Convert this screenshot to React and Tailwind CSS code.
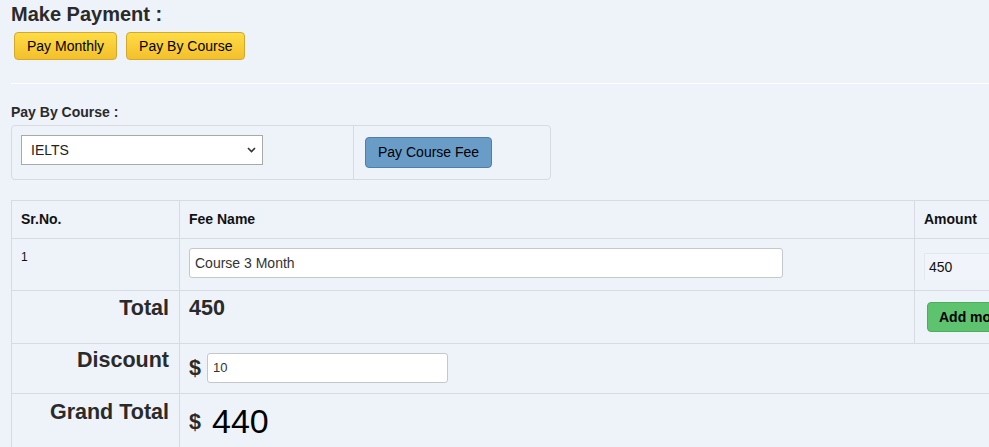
import React from "react";

export default function App() {
  const font = { fontFamily: '"Liberation Sans", Arial, sans-serif' };
  return (
    <div className="h-screen w-full overflow-hidden bg-[#eef2f9] text-[#222]" style={font}>
      <div className="pl-[11px] pt-[2px]">
        <div className="text-[20px] font-bold leading-[24px] text-[#2a2a2a]">Make Payment :</div>
        <div className="mt-[6px] flex gap-[9px] pl-[3px]">
          <button className="h-[28px] rounded-[4px] border border-[#d1a92e] bg-gradient-to-b from-[#fedc43] to-[#f3c02c] px-[12px] text-[14px] text-black">
            Pay Monthly
          </button>
          <button className="h-[28px] rounded-[4px] border border-[#d1a92e] bg-gradient-to-b from-[#fedc43] to-[#f3c02c] px-[12px] text-[14px] text-black">
            Pay By Course
          </button>
        </div>
        <div className="mt-[23px] h-px bg-white" />
        <div className="mt-[19px] text-[14px] font-bold leading-[18px] text-[#2a2a2a]">Pay By Course :</div>
        <div className="mt-[4px] flex h-[55px] w-[540px] rounded-[4px] border border-[#d7dbe1]">
          <div className="w-[342px] border-r border-[#d7dbe1] pl-[9px] pt-[9px]">
            <div className="flex h-[30px] w-[242px] items-center justify-between border border-[#a9a9a9] bg-white pl-[9px] pr-[6px] text-[14px] text-[#222]">
              <span>IELTS</span>
              <svg width="9" height="6" viewBox="0 0 9 6" fill="none">
                <path d="M1 1 L4.5 4.5 L8 1" stroke="#333" strokeWidth="1.6" />
              </svg>
            </div>
          </div>
          <div className="pl-[11px] pt-[11px]">
            <button className="h-[31px] rounded-[4px] border border-[#4f7fa8] bg-[#6a9cc8] px-[12px] text-[14px] text-black">
              Pay Course Fee
            </button>
          </div>
        </div>

        <table className="mt-[20px] w-[1100px] table-fixed border-collapse text-[#111]">
          <colgroup>
            <col className="w-[168px]" />
            <col className="w-[735px]" />
            <col />
          </colgroup>
          <tbody>
            <tr className="h-[38px]">
              <th className="border border-[#d7dbe1] px-[9px] text-left align-middle text-[14px] font-bold">Sr.No.</th>
              <th className="border border-[#d7dbe1] px-[9px] text-left align-middle text-[14px] font-bold">Fee Name</th>
              <th className="border border-[#d7dbe1] px-[9px] text-left align-middle text-[14px] font-bold">Amount</th>
            </tr>
            <tr className="h-[52px]">
              <td className="border border-[#d7dbe1] px-[9px] pt-[10px] align-top text-[12px] leading-[16px]">1</td>
              <td className="border border-[#d7dbe1] px-[9px] pt-[9px] align-top">
                <div className="flex h-[30px] w-[594px] items-center rounded-[3px] border border-[#c4c7cc] bg-white pl-[5px] text-[14px] text-[#333]">
                  Course 3 Month
                </div>
              </td>
              <td className="border border-[#d7dbe1] px-[9px] pt-[14px] align-top">
                <div className="flex h-[27px] w-[200px] items-center border-l border-t border-[#e3e7ee] bg-[#f1f4fa] pl-[4px] text-[14px] text-[#111]">
                  450
                </div>
              </td>
            </tr>
            <tr className="h-[53px]">
              <td className="border border-[#d7dbe1] pr-[10px] pt-[5px] text-right align-top text-[21.5px] font-bold leading-[25px] text-[#2a2a2a]">
                Total
              </td>
              <td className="border border-[#d7dbe1] px-[9px] pt-[5px] align-top text-[21.5px] font-bold leading-[25px] text-[#2a2a2a]">
                450
              </td>
              <td className="border border-[#d7dbe1] pl-[12px] pt-[11px] align-top">
                <button className="h-[30px] whitespace-nowrap rounded-[4px] border border-[#4cae5c] bg-[#5ec36f] px-[11px] text-[14px] font-bold text-black">
                  Add more
                </button>
              </td>
            </tr>
            <tr className="h-[50px]">
              <td className="border border-[#d7dbe1] pr-[10px] pt-[4px] text-right align-top text-[21.5px] font-bold leading-[25px] text-[#2a2a2a]">
                Discount
              </td>
              <td colSpan={2} className="border border-[#d7dbe1] px-[9px] pt-[9px] align-top">
                <div className="flex items-center gap-[6px]">
                  <span className="text-[21.5px] font-bold leading-[25px] text-[#2a2a2a]">$</span>
                  <div className="flex h-[30px] w-[241px] items-center rounded-[3px] border border-[#c4c7cc] bg-white pl-[5px] text-[13px] text-[#333]">
                    10
                  </div>
                </div>
              </td>
            </tr>
            <tr className="h-[60px]">
              <td className="border border-[#d7dbe1] pr-[10px] pt-[6px] text-right align-top text-[21.5px] font-bold leading-[25px] text-[#2a2a2a]">
                Grand Total
              </td>
              <td colSpan={2} className="border border-[#d7dbe1] px-[9px] pt-[7px] align-top">
                <div className="flex items-end gap-[11px]">
                  <span className="mb-[6px] text-[21.5px] font-bold leading-[25px] text-[#2a2a2a]">$</span>
                  <span className="text-[34px] leading-[40px] text-black">440</span>
                </div>
              </td>
            </tr>
          </tbody>
        </table>
      </div>
    </div>
  );
}
